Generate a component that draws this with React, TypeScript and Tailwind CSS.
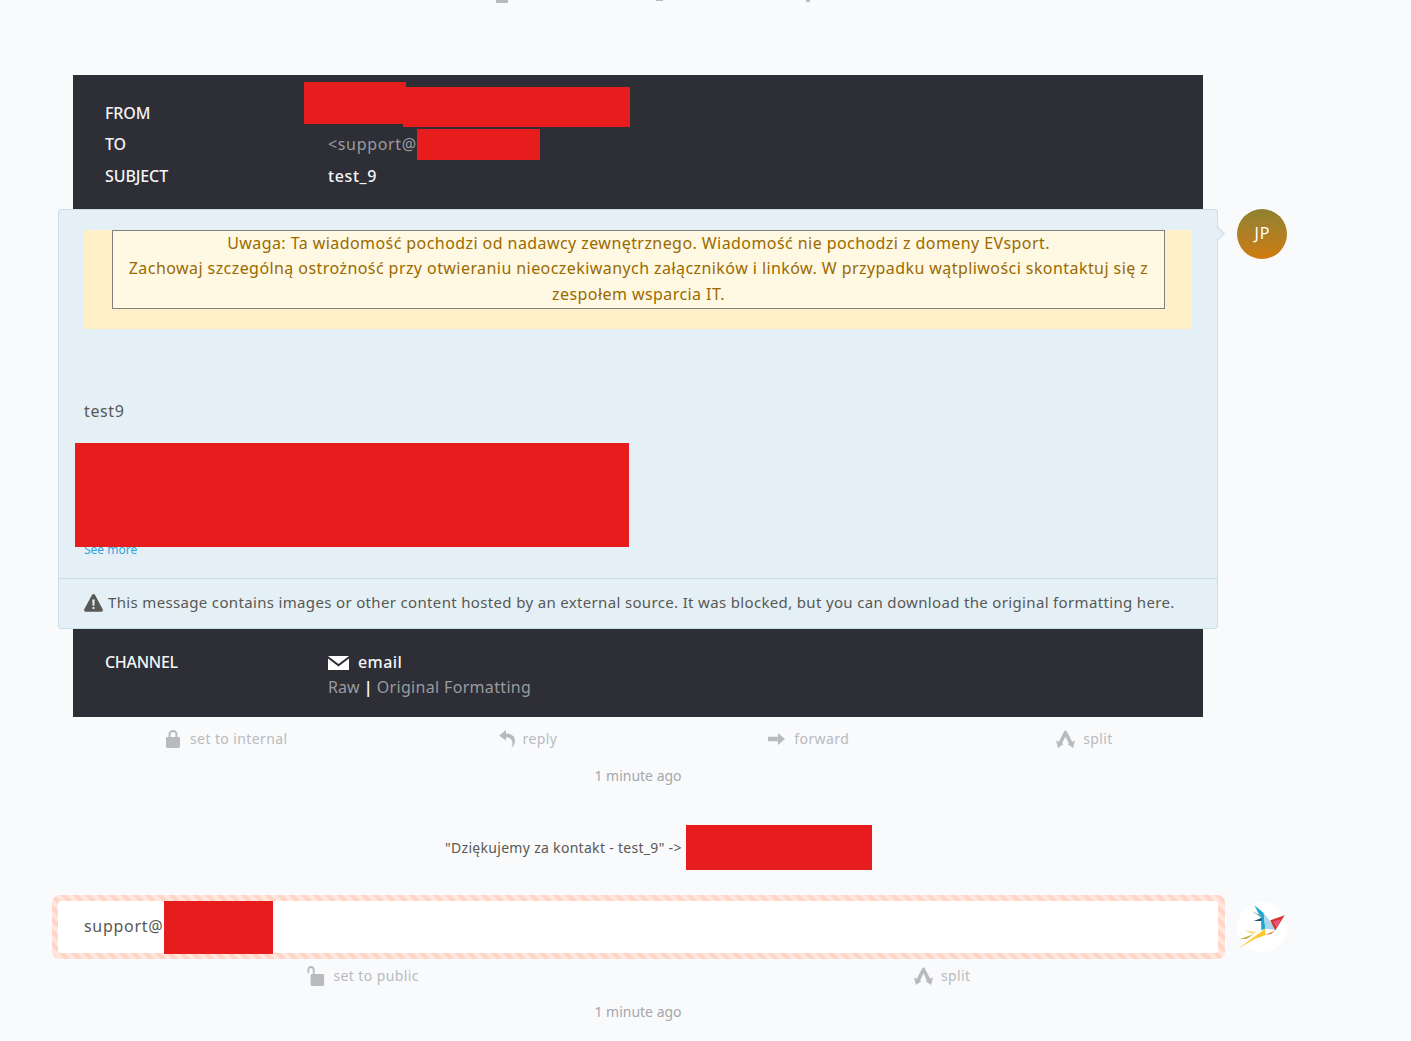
import React from "react";

const LockIcon = () => (
  <svg width="14" height="18" viewBox="0 0 14 18" className="mr-[2px] fill-[#b8babd]">
    <path d="M7 0C4.200 0 2.500 1.900 2.500 4.600V7H1.400C.6 7 0 7.600 0 8.400v8.200C0 17.400.6 18 1.400 18h11.200c.8 0 1.400-.6 1.400-1.400V8.400C14 7.600 13.400 7 12.600 7h-1.100V4.600C11.500 1.900 9.800 0 7 0zm0 2c1.600 0 2.500 1 2.500 2.700V7h-5V4.700C4.500 3 5.400 2 7 2z" />
  </svg>
);

const UnlockIcon = () => (
  <svg width="18" height="20" viewBox="0 0 20 20" className="ml-[2px] fill-[#b8babd]" preserveAspectRatio="none">
    <path d="M4.500 0C2 0 .5 1.700.5 4.200V7h2V4.200C2.500 2.800 3.200 2 4.500 2s2 .8 2 2.200V8.500h2V4.200C8.500 1.700 7 0 4.500 0z" />
    <path d="M5.400 8h12.200c.8 0 1.400.6 1.400 1.400v9.200c0 .8-.6 1.400-1.400 1.400H5.400C4.600 20 4 19.400 4 18.600V9.400C4 8.600 4.600 8 5.400 8z" />
  </svg>
);

const ReplyIcon = () => (
  <svg width="16" height="18" viewBox="0 0 16 18" className="fill-[#b8babd]">
    <path d="M7 0 0 5.500 7 10.500V7.200c3.800 0 6.200 2 6.500 5.600.1 1.900-.4 3.500-1.300 5.200 2.500-1.900 3.800-4.400 3.800-7.300C16 6.400 12.500 3.600 7 3.500V0z" />
  </svg>
);

const ForwardIcon = () => (
  <svg width="17" height="12" viewBox="0 0 17 12" className="mr-[1px] fill-[#b8babd]">
    <path d="M10 0l7 6-7 6V8.200H0V3.800h10V0z" />
  </svg>
);

const SplitIcon = () => (
  <svg width="19" height="18" viewBox="0 0 19 18" className="fill-[#b8babd]">
    <path d="M9.500 2.500 4.500 12.500M9.500 2.500l5 10" fill="none" stroke="#b8babd" strokeWidth="3.600" strokeLinecap="round" />
    <polygon points="0,10.500 7.500,14 2,18" />
    <polygon points="19,10.500 11.500,14 17,18" />
  </svg>
);

const WarningIcon = () => (
  <svg width="19" height="18" viewBox="0 0 19 18" className="fill-[#585856]">
    <path
      fillRule="evenodd"
      d="M9.500 0c.6 0 1.100.3 1.400.8l7.800 14.500c.6 1.100-.2 2.500-1.400 2.500H1.700C.5 17.800-.3 16.400.3 15.300L8.100.8C8.400.3 8.900 0 9.500 0zM8.300 5.500l.3 6.300h1.800l.3-6.300H8.300zM9.500 12.900c-.7 0-1.200.5-1.200 1.200s.5 1.200 1.200 1.200 1.200-.5 1.200-1.200-.5-1.200-1.200-1.200z"
    />
  </svg>
);

const MailIcon = () => (
  <svg width="21" height="14" viewBox="0 0 21 14" className="fill-white">
    <path d="M0 0h21L10.500 8 0 0zM0 2.400l10.500 8 10.500-8V14H0V2.400z" />
  </svg>
);

const BirdLogo = () => (
  <svg width="50" height="50" viewBox="0 0 50 50">
    <circle cx="25" cy="25" r="25" fill="#fff" />
    <polygon points="17.300,3.300 26.700,11 28.300,26.700 24.300,28.300 24,16" fill="#1ca7cf" />
    <polygon points="26.700,11 40,28.300 28.300,26.700" fill="#a9d8ec" />
    <polygon points="15,9.300 25.700,14.300 24,15.500" fill="#7fa0ad" />
    <polygon points="16.700,19 25,15.700 24.200,19" fill="#1f5a74" />
    <polygon points="33.300,18.300 47.700,13.300 38.300,28.300 35.500,23" fill="#d9342b" />
    <polygon points="36,20 44,17 39.500,25.500" fill="#e8557f" />
    <polygon points="28.300,33.300 38.300,28.300 34.300,31.700" fill="#ee5a24" />
    <polygon points="7.700,28.300 20,30 15,32.300" fill="#fbe08a" />
    <polygon points="2.300,37.300 16.700,32.300 10,36.700" fill="#c9a93a" />
    <polygon points="1,46.700 28.300,26.700 28.300,33.300 18.300,36.700" fill="#fdc82f" />
  </svg>
);

const Redaction = ({ className }: { className: string }) => (
  <div className={`absolute bg-[#e71c1c] ${className}`} />
);

const Action = ({ icon, label, className = "" }: { icon: React.ReactNode; label: string; className?: string }) => (
  <div className={`flex items-center gap-2 text-sm tracking-[0.4px] text-[#b8babd] ${className}`}>
    {icon}
    <span>{label}</span>
  </div>
);

const TimeAgo = () => (
  <div className="text-center text-sm leading-[22px] text-[#a5a7ab]">1 minute ago</div>
);

const MetaRow = ({ label, children }: { label: string; children: React.ReactNode }) => (
  <div className="flex">
    <div className="w-[223px] font-medium tracking-[-0.1px]">{label}</div>
    <div>{children}</div>
  </div>
);

export default function App() {
  return (
    <div className="h-[1041px] w-full overflow-hidden bg-[#f9fafc] font-['Noto_Sans',sans-serif] text-base leading-[25.6px] text-[#585856]">
      {/* bottom edge of the previous article, scrolled off */}
      <div className="relative h-[4px] w-full">
        <div className="absolute left-[496px] top-0 h-[3px] w-[12px] bg-[#b8babd]" />
        <div className="absolute left-[656px] top-0 h-[1px] w-[7px] bg-[#b8babd]" />
        <div className="absolute left-[806px] top-0 h-[2px] w-[4px] bg-[#b8babd]" />
      </div>

      <div className="ml-[58px] mt-[71px] w-[1160px]">
        <div className="relative mx-[15px] flex flex-col gap-[6px] bg-[#2d2e36] pb-[19.4px] pl-[32px] pt-[25.6px] text-[#f5f5f5]">
          <MetaRow label="FROM">&nbsp;</MetaRow>
          <MetaRow label="TO">
            <span className="tracking-[0.65px] text-[#9a9b9e]">&lt;support@</span>
          </MetaRow>
          <MetaRow label="SUBJECT">
            <span className="font-medium tracking-[0.6px]">test_9</span>
          </MetaRow>
          <Redaction className="left-[231px] top-[7px] h-[42px] w-[102px]" />
          <Redaction className="left-[330px] top-[12px] h-[40px] w-[227px]" />
          <Redaction className="left-[344px] top-[54px] h-[31px] w-[123px]" />
        </div>

        <div className="flex w-[1229px] items-start gap-[19px]">
          <div className="relative h-[420px] w-[1160px] shrink-0 rounded-[3px] border border-[#cbdde8] bg-[#e4f0f5]">
            <div className="absolute right-[-6px] top-[19px] h-[9px] w-[9px] rotate-45 border-r border-t border-[#cbdde8] bg-[#e4f0f5]" />
            <div className="relative flex h-[368px] flex-col px-[25px] pt-[20px]">
              <div className="h-[99px] w-[1108px] bg-[#fff0c9] pl-[28px] pr-[27px]">
                <div className="border border-[#808080] bg-[#fff8e2] px-[10px] text-center tracking-[0.43px] text-[#9a6a00]">
                  Uwaga: Ta wiadomość pochodzi od nadawcy zewnętrznego. Wiadomość nie pochodzi z domeny EVsport.
                  <br />
                  Zachowaj szczególną ostrożność przy otwieraniu nieoczekiwanych załączników i linków. W przypadku
                  wątpliwości skontaktuj się z zespołem wsparcia IT.
                </div>
              </div>
              <div className="mt-[70px] tracking-[0.6px]">test9</div>
              <div className="mt-[116px] text-xs leading-[20px] text-[#31a3dd]">See more</div>
              <Redaction className="left-[16px] top-[233px] h-[104px] w-[554px]" />
            </div>
            <div className="flex h-[50px] items-center gap-[5px] border-t border-[#cbdde8] pl-[25px]">
              <WarningIcon />
              <span className="text-[15px] tracking-[0.34px]">
                This message contains images or other content hosted by an external source. It was blocked, but you
                can download the original formatting here.
              </span>
            </div>
          </div>
          <div className="flex h-[50px] w-[50px] shrink-0 items-center justify-center rounded-full bg-gradient-to-b from-[#8e8131] to-[#cf7b0c] pl-[1px] tracking-[1px] text-white">
            JP
          </div>
        </div>

        <div className="mx-[15px] flex h-[88px] bg-[#2d2e36] pl-[32px] pt-[21.500px] text-[#f5f5f5]">
          <div className="w-[223px] font-medium tracking-[-0.3px]">CHANNEL</div>
          <div>
            <div className="flex items-center gap-[9px] font-medium tracking-[0.4px]">
              <MailIcon />
              email
            </div>
            <div className="mt-[-0.800px] text-[#9a9b9e]">
              Raw <span className="font-semibold text-white">|</span>{" "}
              <span className="tracking-[0.33px]">Original Formatting</span>
            </div>
          </div>
        </div>

        <div className="flex h-[44px] items-center gap-[211px] pl-[108px]">
          <Action icon={<LockIcon />} label="set to internal" />
          <Action icon={<ReplyIcon />} label="reply" />
          <Action icon={<ForwardIcon />} label="forward" />
          <Action icon={<SplitIcon />} label="split" className="ml-[-4px]" />
        </div>
        <div className="mt-[4px]">
          <TimeAgo />
        </div>

        <div className="relative mt-[38px] h-[44px]">
          <div className="flex h-[46px] items-center pl-[387px] text-sm tracking-[0.3px]">
            "Dziękujemy za kontakt - test_9" -&gt; "
          </div>
          <Redaction className="left-[628px] top-0 h-[45px] w-[186px]" />
        </div>

        <div className="mt-[26px] flex w-[1229px] items-center gap-[19px]">
          <div className="ml-[-6px] w-[1173px] shrink-0 rounded-[8px] bg-[repeating-linear-gradient(45deg,#ffd6c6_0,#ffd6c6_4.250px,#ffe6df_4.250px,#ffe6df_8.500px)] pb-[6px] pl-[6px] pr-[7px] pt-[6px]">
            <div className="relative flex h-[52px] items-center rounded-[3px] bg-white pl-[26px] tracking-[0.7px]">
              support@
              <Redaction className="left-[106px] top-0 h-[53px] w-[109px]" />
            </div>
          </div>
          <div className="ml-[-7px] shrink-0">
            <BirdLogo />
          </div>
        </div>

        <div className="flex h-[34px] items-center justify-around">
          <Action icon={<UnlockIcon />} label="set to public" />
          <Action icon={<SplitIcon />} label="split" />
        </div>
        <div className="mt-[8px]">
          <TimeAgo />
        </div>
      </div>
    </div>
  );
}
